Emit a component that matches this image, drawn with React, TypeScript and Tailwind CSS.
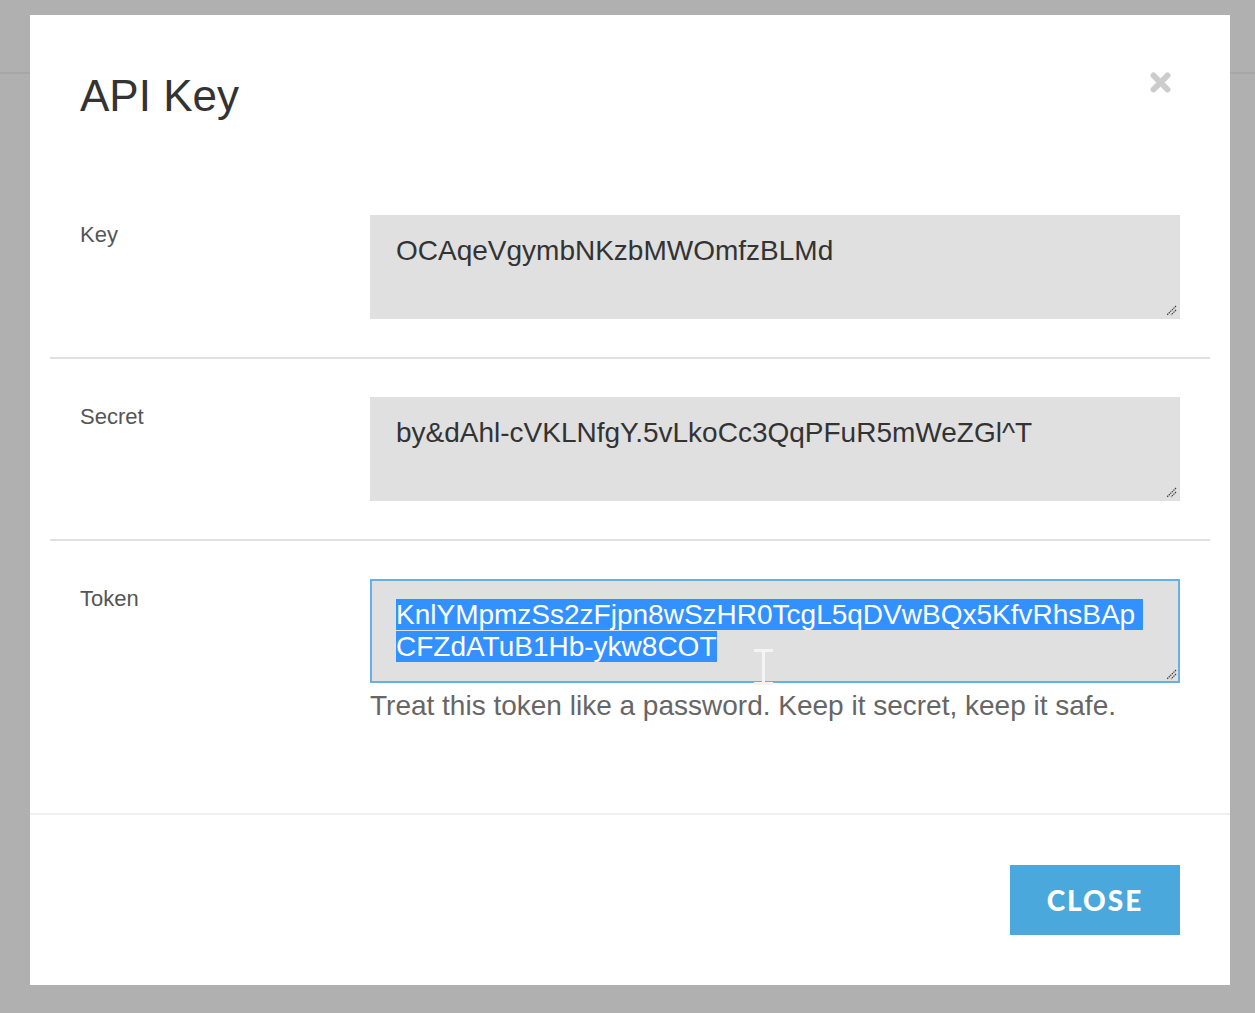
const rows = [
  { label: "Key", value: "OCAqeVgymbNKzbMWOmfzBLMd" },
  { label: "Secret", value: "by&dAhl-cVKLNfgY.5vLkoCc3QqPFuR5mWeZGl^T" },
];

function Grip() {
  return (
    <svg className="absolute bottom-[1px] right-[1px]" width="11" height="11" viewBox="0 0 11 11">
      <path d="M10 1L1 10M10 5L5 10" stroke="#3a3a3a" strokeWidth="1.2" strokeDasharray="1.4 0.8" />
    </svg>
  );
}

export default function App() {
  return (
    <div className="relative h-[1013px] w-full overflow-hidden bg-[#b0b0b0] font-['Liberation_Sans',Arial,sans-serif]">
      <div className="h-[74px] border-b-2 border-[#a6a6a6]" />

      <div className="absolute left-[30px] top-[15px] flex h-[970px] w-[1200px] flex-col bg-white">
        <header className="flex h-[162px] items-start justify-between pl-[50px] pr-[59px] pt-[56px]">
          <h1 className="text-[44px] leading-[50px] text-[#333]">API Key</h1>
          <button className="mt-[1px]" aria-label="Close">
            <svg width="21" height="21" viewBox="0 0 21 21">
              <path d="M3.5 3.5L17.5 17.5M17.5 3.5L3.5 17.5" stroke="#cccccc" strokeWidth="6" strokeLinecap="round" />
            </svg>
          </button>
        </header>

        <div className="flex-1 px-[20px]">
          {rows.map((r) => (
            <div key={r.label} className="grid grid-cols-[290px_1fr] border-b-2 border-[#e0e0e0] px-[30px] py-[38px]">
              <div className="pt-[5px] text-[22px] leading-[30px] text-[#555]">{r.label}</div>
              <div className="relative h-[104px] border-2 border-[#e0e0e0] bg-[#e0e0e0] pl-[24px] pt-[18px] text-[28px] leading-[32px] text-[#333]">
                {r.value}
                <Grip />
              </div>
            </div>
          ))}

          <div className="grid grid-cols-[290px_1fr] px-[30px] py-[38px]">
            <div className="pt-[5px] text-[22px] leading-[30px] text-[#555]">Token</div>
            <div>
              <div className="relative h-[104px] border-2 border-[#66b0ea] bg-[#e0e0e0] pl-[24px] pt-[18px] text-[28px] leading-[32px] text-white">
                <span className="bg-[#3390ff]">KnlYMpmzSs2zFjpn8wSzHR0TcgL5qDVwBQx5KfvRhsBAp{"\u00a0"}</span>
                <br />
                <span className="bg-[#3390ff]">CFZdATuB1Hb-ykw8COT</span>
                <svg className="absolute left-[382px] top-[68px]" width="19" height="36" viewBox="0 0 19 36">
                  <path d="M0 1.5H19M0 34.5H19M9.5 1V35" stroke="#f4f4f4" strokeWidth="3" />
                </svg>
                <Grip />
              </div>
              <p className="mt-[3px] text-[28px] leading-[40px] text-[#666]">
                Treat this token like a password. Keep it secret, keep it safe.
              </p>
            </div>
          </div>
        </div>

        <footer className="flex justify-end border-t-2 border-[#f0f0f0] p-[50px]">
          <button className="h-[70px] w-[170px] bg-[#4aa8dc] font-['Lato',sans-serif] text-[28px] font-black tracking-[2px] text-white">
            CLOSE
          </button>
        </footer>
      </div>
    </div>
  );
}
